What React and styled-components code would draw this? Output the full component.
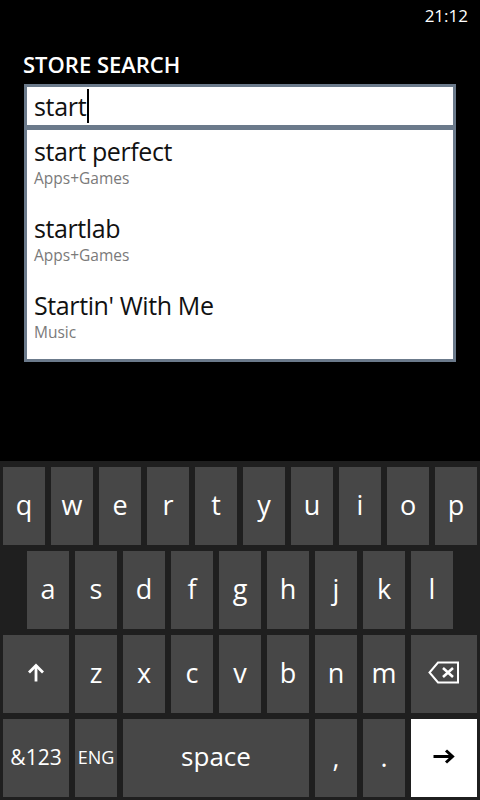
import React from "react";
import styled, { createGlobalStyle } from "styled-components";

const Global = createGlobalStyle`
  html, body { margin: 0; padding: 0; background: #000; }
  body { font-family: "Open Sans", "Noto Sans", sans-serif; }
  * { box-sizing: border-box; }
`;

const Screen = styled.div`
  width: 480px;
  height: 800px;
  background: #000;
  display: flex;
  flex-direction: column;
  overflow: hidden;
`;

const StatusBar = styled.div`
  height: 32px;
  display: flex;
  justify-content: flex-end;
  align-items: center;
  padding-right: 12px;
  color: #fff;
  font-size: 17px;
  line-height: 32px;
`;

const Title = styled.h1`
  margin: 18px 0 0 0;
  padding-left: 23px;
  color: #fff;
  font-size: 22px;
  font-weight: 600;
  line-height: 28px;
  letter-spacing: 0;
`;

const SearchBox = styled.div`
  margin: 6px 24px 0 24px;
  height: 44px;
  border: 3px solid #6b7a8b;
  background: #fff;
  display: flex;
  align-items: center;
  padding-left: 7px;
  font-size: 25px;
  line-height: 38px;
  letter-spacing: -0.3px;
  color: #111;
`;

const Caret = styled.span`
  display: inline-block;
  width: 2px;
  height: 34px;
  background: #000;
  margin-left: 1px;
  align-self: center;
`;

const Suggestions = styled.ul`
  list-style: none;
  margin: 0 24px;
  padding: 0;
  border: 3px solid #6b7a8b;
  border-top-width: 2px;
  background: #fff;
`;

const Suggestion = styled.li`
  padding: 6px 0 18px 7px;
  display: flex;
  flex-direction: column;
  gap: 1px;
  &:last-child { padding-bottom: 16px; }
`;

const SugTitle = styled.span`
  font-size: 25px;
  line-height: 30px;
  letter-spacing: -0.4px;
  color: #111;
`;

const SugSub = styled.span`
  font-size: 15.5px;
  line-height: 22px;
  color: #7a7a7a;
`;

const Spacer = styled.div`
  flex: 1;
`;

const Keyboard = styled.div`
  height: 339px;
  background: #1f1f1f;
  padding: 6px 3px 3px 3px;
  display: flex;
  flex-direction: column;
  gap: 6px;
`;

const Row = styled.div`
  display: flex;
  gap: 6px;
  height: 78px;
  padding-left: ${(p) => p.$indent || 0}px;
`;

const Key = styled.div`
  width: ${(p) => p.$w || 42}px;
  height: 78px;
  flex: none;
  background: ${(p) => (p.$light ? "#ffffff" : "#474747")};
  color: ${(p) => (p.$light ? "#000" : "#fff")};
  display: flex;
  align-items: center;
  justify-content: center;
  font-size: ${(p) => p.$fs || 27}px;
  line-height: 1;
  padding-bottom: ${(p) => p.$pb || 4}px;
`;

const BackspaceIcon = () => (
  <svg width="32" height="23" viewBox="0 0 32 23">
    <path d="M10 1.5 H30 V21.5 H10 L1.5 11.5 Z" fill="none" stroke="#fff" strokeWidth="2" strokeLinejoin="miter" />
    <path d="M15 7 L25 16 M25 7 L15 16" stroke="#fff" strokeWidth="2.6" />
  </svg>
);

const ShiftIcon = () => (
  <svg width="18" height="19" viewBox="0 0 18 19">
    <path d="M9 2.5 V18.5" stroke="#fff" strokeWidth="2.8" />
    <path d="M2 9.5 L9 2.5 L16 9.5" fill="none" stroke="#fff" strokeWidth="2.8" />
  </svg>
);

const EnterIcon = () => (
  <svg width="22" height="15" viewBox="0 0 22 15">
    <path d="M0.5 7.5 H19" stroke="#000" strokeWidth="3" />
    <path d="M13 1.5 L19.5 7.5 L13 13.5" fill="none" stroke="#000" strokeWidth="3" />
  </svg>
);

const row1 = ["q", "w", "e", "r", "t", "y", "u", "i", "o", "p"];
const row2 = ["a", "s", "d", "f", "g", "h", "j", "k", "l"];
const row3 = ["z", "x", "c", "v", "b", "n", "m"];

const items = [
  { t: "start perfect", s: "Apps+Games" },
  { t: "startlab", s: "Apps+Games" },
  { t: "Startin' With Me", s: "Music" },
];

export default function App() {
  return (
    <>
      <Global />
      <Screen>
        <StatusBar>21:12</StatusBar>
        <Title>STORE SEARCH</Title>
        <SearchBox>
          <span>start</span>
          <Caret />
        </SearchBox>
        <Suggestions>
          {items.map((it) => (
            <Suggestion key={it.t}>
              <SugTitle>{it.t}</SugTitle>
              <SugSub>{it.s}</SugSub>
            </Suggestion>
          ))}
        </Suggestions>
        <Spacer />
        <Keyboard>
          <Row>
            {row1.map((k) => (
              <Key key={k}>{k}</Key>
            ))}
          </Row>
          <Row $indent={24}>
            {row2.map((k) => (
              <Key key={k}>{k}</Key>
            ))}
          </Row>
          <Row>
            <Key $w={66} $pb={0}>
              <ShiftIcon />
            </Key>
            {row3.map((k) => (
              <Key key={k}>{k}</Key>
            ))}
            <Key $w={66} $pb={0}>
              <BackspaceIcon />
            </Key>
          </Row>
          <Row>
            <Key $w={66} $fs={21} $pb={2}>&amp;123</Key>
            <Key $fs={18} $pb={2}>ENG</Key>
            <Key $w={186} $fs={26}>space</Key>
            <Key>,</Key>
            <Key>.</Key>
            <Key $w={66} $light $pb={0}>
              <EnterIcon />
            </Key>
          </Row>
        </Keyboard>
      </Screen>
    </>
  );
}
